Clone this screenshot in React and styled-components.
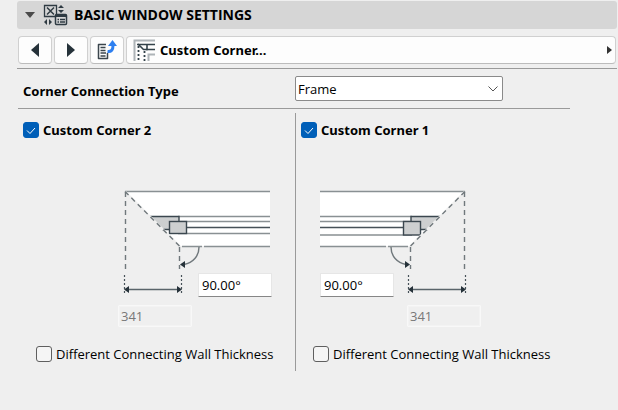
import { useState } from "react";
import styled, { createGlobalStyle } from "styled-components";

const GlobalStyle = createGlobalStyle`
  * {
    box-sizing: border-box;
  }
  body {
    margin: 0;
    background: #efefef;
    color: #000;
    font-family: "Open Sans", "Noto Sans", sans-serif;
    font-size: 13px;
    line-height: 16px;
  }
  button, input, select {
    margin: 0;
    font: inherit;
    color: inherit;
  }
  svg {
    display: block;
    flex-shrink: 0;
  }
`;

const boldFont = `"Noto Sans", "Open Sans", sans-serif`;

const Page = styled.main`
  padding: 1px 1px 0 17px;
`;

const Header = styled.h1`
  display: flex;
  align-items: center;
  height: 28px;
  margin: 0 0 7px;
  padding-left: 8px;
  border-radius: 3px;
  background: #d6d6d6;
  font-size: 14px;
  font-weight: 700;
`;

const Collapse = styled.button`
  display: flex;
  align-items: center;
  justify-content: center;
  width: 10px;
  height: 20px;
  margin-right: 8px;
  padding: 0;
  border: 0;
  background: none;
`;

const HeaderText = styled.span`
  margin-left: 6px;
`;

const Toolbar = styled.div`
  display: flex;
  gap: 2px;
  padding: 0 1px 4px;
  border-bottom: 1px solid #9a9a9a;
`;

const ToolButton = styled.button`
  display: flex;
  align-items: center;
  justify-content: center;
  width: 34px;
  height: 28px;
  padding: 0;
  border: 1px solid #d0d0d0;
  border-bottom-color: #bcbcbc;
  border-radius: 4px;
  background: #fdfdfd;
`;

const PageButton = styled(ToolButton)`
  flex: 1;
  justify-content: flex-start;
  padding: 0 3px 0 6px;
  font-family: ${boldFont};
  font-weight: 700;
`;

const PageName = styled.span`
  flex: 1;
  margin-left: 5px;
  text-align: left;
`;

const Form = styled.form`
  margin: 0 47px 0 1px;
`;

const TypeRow = styled.div`
  display: grid;
  grid-template-columns: 277fr 275fr;
  align-items: center;
  padding: 7px 0;
  border-bottom: 1px solid #9a9a9a;
`;

const TypeLabel = styled.label`
  padding: 4px 0 0 5px;
  font-family: ${boldFont};
  font-weight: 700;
`;

const SelectBox = styled.div`
  display: grid;
  align-items: center;
  width: 208px;

  select, svg {
    grid-area: 1 / 1;
  }
  svg {
    justify-self: end;
    margin-right: 5px;
    pointer-events: none;
  }
`;

const Select = styled.select`
  appearance: none;
  width: 100%;
  height: 25px;
  padding: 0 20px 0 2px;
  border: 1px solid #8a8a8a;
  border-radius: 2px;
  background: #fff;
`;

const Corners = styled.div`
  display: grid;
  grid-template-columns: 277fr 275fr;
  padding-top: 4px;
`;

const CornerPanel = styled.section`
  display: flex;
  flex-direction: column;
  align-items: ${(p) => (p.$mirror ? "flex-start" : "flex-end")};
  height: 258px;
  padding: 9px 0 0 5px;
  ${(p) => p.$mirror && "border-left: 1px solid #9a9a9a;"}
`;

const CheckLabel = styled.label`
  display: flex;
  align-items: center;
  align-self: flex-start;
  gap: 4px;
  white-space: nowrap;
  ${(p) => p.$bold && `font-family: ${boldFont}; font-weight: 700;`}
`;

const CheckBox = styled.span`
  display: grid;

  input, svg {
    grid-area: 1 / 1;
  }
  svg {
    pointer-events: none;
  }
`;

const Tick = styled.input`
  appearance: none;
  width: 16px;
  height: 16px;
  border: 1px solid #5f5f5f;
  border-radius: 3px;
  background: #f5f5f5;

  &:checked {
    border-color: #005fb8;
    background: #005fb8;
  }
`;

const Figure = styled.div`
  width: ${(p) => (p.$mirror ? 152 : 154)}px;
  margin: ${(p) => (p.$mirror ? "52px 0 0 19px" : "52px 23px 0 0")};
`;

const AngleRow = styled.div`
  display: flex;
  flex-direction: ${(p) => (p.$mirror ? "row-reverse" : "row")};
  justify-content: space-between;
  margin-top: 3px;
`;

const Field = styled.input`
  width: 74px;
  height: 24px;
  padding: 0 3px;
  border: 1px solid #e6e6e6;
  border-bottom-color: #868686;
  border-radius: 1px;
  background: #fff;

  &:disabled {
    height: 22px;
    padding: 0 2px;
    border-color: #f8f8f8;
    box-shadow: inset 0 0 0 1px #f3f3f3;
    background: #efefef;
    color: #787878;
  }
`;

const ThicknessRow = styled.div`
  margin-top: 8px;
  padding-left: ${(p) => (p.$mirror ? 87 : 0)}px;
`;

const WallOption = styled.div`
  align-self: flex-start;
  margin: 19px 0 0 ${(p) => (p.$mirror ? 12 : 13)}px;
`;

const Triangle = ({ points, width, height, color = "#26323a" }) => (
  <svg width={width} height={height} aria-hidden="true">
    <polygon points={points} fill={color} />
  </svg>
);

const WindowSettingsIcon = () => (
  <svg width="25" height="22" viewBox="0 0 25 22" fill="none" stroke="#2f3b43" aria-hidden="true">
    <path d="M1.5 1.5h12v11h-12z" strokeWidth="1.3" />
    <path d="M4 3.5l7 7M11 3.5l-7 7" strokeWidth="1.5" />
    <path d="M18 1l3 3h-6zM18 9l3-3h-6z" fill="#2f3b43" stroke="none" />
    <path d="M1 18l3-3v6zM9 18l-3-3v6z" fill="#2f3b43" stroke="none" />
    <rect x="12.5" y="10.5" width="11" height="10" rx="1" fill="#d6d6d6" strokeWidth="1.5" />
    <path d="M12.5 12h11" strokeWidth="2" />
    <path d="M14.5 15.5h1.5M17 15.5h5M14.5 18h1.5M17 18h5" strokeWidth="1.3" />
  </svg>
);

const TransferIcon = () => (
  <svg width="22" height="22" viewBox="0 0 22 22" fill="none" aria-hidden="true">
    <path
      d="M10 5.5H2.5v14h9V14"
      stroke="#3b464d"
      strokeWidth="1.5"
      strokeLinejoin="round"
    />
    <path d="M4.5 8.5h5M4.5 11.5h5M4.5 14h5.5M4.5 17h5" stroke="#3b464d" strokeWidth="1.4" />
    <path d="M11.5 12.5c4 .5 5.500-2 5.500-6" stroke="#2d7ff0" strokeWidth="3" />
    <path d="M16.5 1l4.5 6h-9z" fill="#2d7ff0" />
  </svg>
);

const CornerIcon = () => (
  <svg width="22" height="23" viewBox="0 0 22 23" fill="none" aria-hidden="true">
    <path d="M1.5 22V1.5H22" stroke="#aeb4b8" strokeWidth="2" />
    <path d="M15.5 22v-6.500H22" stroke="#aeb4b8" strokeWidth="2" />
    <path d="M4 5.5h18M13 10.5h9" stroke="#33424a" strokeWidth="1.6" />
    <path d="M5 5l5.500 5.500H14V5" stroke="#33424a" strokeWidth="1.6" />
    <path d="M5.5 7v15M11.5 12v10" stroke="#33424a" strokeWidth="1.8" strokeDasharray="2 2" />
  </svg>
);

// plan view of the wall end, drawn for the left side and flipped for the right
const WallDrawing = ({ mirror }) => {
  const low = mirror ? 45 : 43.5;
  return (
    <svg width="152" height="80" viewBox="0 0 152 80" fill="none" aria-hidden="true">
      <g transform={mirror ? "translate(152 0) scale(-1 1)" : undefined}>
        <path d="M7 2H152V56H62z" fill="#fff" />
        <path
          d={`M7 1.5H152M60 26.5H152M62 31.5H152M60 ${low}H152M64 56.5H84M86 56.5H152`}
          stroke="#899093"
          strokeWidth="1.5"
        />
        <path d="M68 37.5H152" stroke="#465158" strokeWidth="1.4" />
        <path d="M32 26.5H61V39.5H45z" fill="#cdcfd0" />
        <path d="M32 26.5H61V32M44 39.5H52" stroke="#3b474f" strokeWidth="1.4" />
        <rect
          x="51.5"
          y="31.5"
          width="17"
          height={low - 31.5}
          fill="#cdcfd0"
          stroke="#3b474f"
          strokeWidth="1.4"
        />
        <path d="M7 1.5L62 56.5" stroke="#efefef" strokeWidth="2" />
        <path d="M7 1.5L62 56.5" stroke="#70787c" strokeWidth="1.4" strokeDasharray="5 4" />
        <path d="M7.5 2V79M61.5 57V79" stroke="#70787c" strokeWidth="1.4" strokeDasharray="5 4" />
        <path d="M81 57C81 66 75 73 66 74.5" stroke="#70787c" strokeWidth="1.4" />
        <path d="M62 74.5L67 71V78z" fill="#26323a" />
      </g>
    </svg>
  );
};

const DimensionDrawing = ({ mirror }) => (
  <svg width="66" height="24" viewBox="0 0 66 24" fill="none" aria-hidden="true">
    <g transform={mirror ? "translate(66 0) scale(-1 1)" : undefined}>
      <path d="M6.5 2V21M63.5 2V21" stroke="#465158" strokeWidth="1.2" strokeDasharray="2 2" />
      <path d="M8 16.5H62" stroke="#59646a" strokeWidth="1.4" />
      <path d="M6 16.5L11 13V20zM64 16.5L59 13V20z" fill="#26323a" />
    </g>
  </svg>
);

const Check = ({ bold, defaultChecked = false, children }) => {
  const [checked, setChecked] = useState(defaultChecked);
  return (
    <CheckLabel $bold={bold}>
      <CheckBox>
        <Tick type="checkbox" checked={checked} onChange={(e) => setChecked(e.target.checked)} />
        {checked && (
          <svg width="16" height="16" viewBox="0 0 16 16" fill="none" aria-hidden="true">
            <path d="M4 8.5L7 11.5L12 6" stroke="#fff" />
          </svg>
        )}
      </CheckBox>
      {children}
    </CheckLabel>
  );
};

const Corner = ({ name, mirror }) => (
  <CornerPanel $mirror={mirror}>
    <Check bold defaultChecked>{name}</Check>
    <Figure $mirror={mirror}>
      <WallDrawing mirror={mirror} />
      <AngleRow $mirror={mirror}>
        <DimensionDrawing mirror={mirror} />
        <Field type="text" aria-label={`${name} angle`} defaultValue="90.00°" />
      </AngleRow>
      <ThicknessRow $mirror={mirror}>
        <Field type="text" aria-label={`${name} wall thickness`} defaultValue="341" disabled />
      </ThicknessRow>
    </Figure>
    <WallOption $mirror={mirror}>
      <Check>Different Connecting Wall Thickness</Check>
    </WallOption>
  </CornerPanel>
);

const App = () => {
  return (
    <Page>
      <GlobalStyle />
      <Header>
        <Collapse type="button" aria-label="Collapse">
          <Triangle width="10" height="6" points="0,0 10,0 5,6" color="#4a4a4a" />
        </Collapse>
        <WindowSettingsIcon />
        <HeaderText>BASIC WINDOW SETTINGS</HeaderText>
      </Header>
      <Toolbar>
        <ToolButton type="button" aria-label="Previous page">
          <Triangle width="8" height="14" points="8,0 8,14 0,7" />
        </ToolButton>
        <ToolButton type="button" aria-label="Next page">
          <Triangle width="8" height="14" points="0,0 0,14 8,7" />
        </ToolButton>
        <ToolButton type="button" aria-label="Transfer settings">
          <TransferIcon />
        </ToolButton>
        <PageButton type="button">
          <CornerIcon />
          <PageName>Custom Corner...</PageName>
          <Triangle width="5" height="8" points="0,0 0,8 5,4" color="#333" />
        </PageButton>
      </Toolbar>
      <Form>
        <TypeRow>
          <TypeLabel htmlFor="type">Corner Connection Type</TypeLabel>
          <SelectBox>
            <Select id="type" defaultValue="Frame">
              <option>Frame</option>
            </Select>
            <svg width="10" height="6" viewBox="0 0 10 6" fill="none" aria-hidden="true">
              <path d="M.5.5L5 5L9.5.5" stroke="#555" />
            </svg>
          </SelectBox>
        </TypeRow>
        <Corners>
          <Corner name="Custom Corner 2" />
          <Corner name="Custom Corner 1" mirror />
        </Corners>
      </Form>
    </Page>
  );
};

export default App;
